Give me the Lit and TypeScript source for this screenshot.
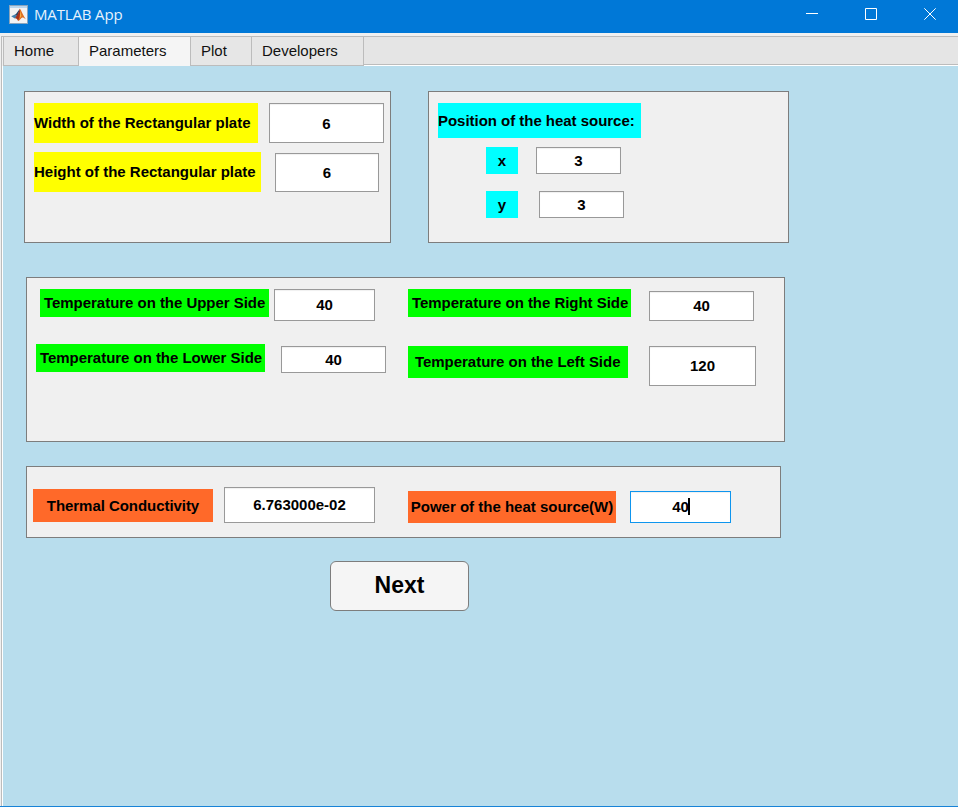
import { LitElement, html, css } from "lit";
import { customElement, property } from "lit/decorators.js";

@customElement("title-bar")
class TitleBar extends LitElement {
  static styles = css`
    :host {
      display: flex;
      height: 33px;
      background: #0078d7;
      color: #fff;
    }
    .logo {
      flex: none;
      margin: 5px 0 0 9px;
    }
    .name {
      flex: 1;
      margin-left: 6px;
      font: 15px/29px "Open Sans", "Noto Sans", sans-serif;
      font-weight: 400;
      letter-spacing: -0.15px;
      color: #e6f2fc;
    }
    .buttons {
      display: flex;
      gap: 47px;
      padding: 8px 22px 0 0;
    }
    .buttons svg {
      display: block;
      fill: none;
      stroke: #fff;
    }
  `;

  render() {
    return html`
      <svg class="logo" width="19" height="19" viewBox="0 0 19 19">
        <rect x="0" y="0" width="19" height="19" fill="#8aa5bd" />
        <rect x="1" y="1" width="17" height="17" fill="#f2f3f4" />
        <rect x="1" y="1" width="17" height="2" fill="#b9d6ee" />
        <path d="M2.2 11.2 6 9.4 8.4 11.6 5.8 13.4Z" fill="#3f7fae" />
        <path d="M6 9.4C7.8 8.8 8.6 6.4 10.8 4L8.6 11.5Z" fill="#27466b" />
        <path d="M10.8 3.8C9.8 7 8.6 10.4 5.8 13.4 7.4 13 8.2 14.6 9 15.8 10.6 15.4 11.6 12.6 12.6 12.4Z" fill="#a8321c" />
        <path d="M10.8 3.8C11.8 4 12.8 8.4 16.8 14.2 14.4 12.4 13.2 12 12.2 13.2 11.2 14.4 10.4 15.5 9 15.8 11 12 11.4 8 10.8 3.8Z" fill="#e0701f" />
        <path d="M11.2 6 12.4 11 11 13Z" fill="#f6b64a" />
      </svg>
      <div class="name">MATLAB App</div>
      <div class="buttons">
        <svg width="12" height="12" viewBox="0 0 12 12"><path d="M0 5.5H12" /></svg>
        <svg width="12" height="12" viewBox="0 0 12 12"><path d="M.5 .5H11.5V11.5H.5Z" /></svg>
        <svg width="12" height="12" viewBox="0 0 12 12"><path d="M.3 .3 11.7 11.7M11.7 .3 .3 11.7" /></svg>
      </div>
    `;
  }
}

@customElement("tab-strip")
class TabStrip extends LitElement {
  @property() active = "Parameters";

  static styles = css`
    :host {
      display: flex;
      height: 29px;
      border-top: 1px solid #bcbcbc;
      font: 15px/28px "Liberation Sans", Arial, sans-serif;
      color: #111;
    }
    .tab {
      box-sizing: border-box;
      height: 29px;
      padding-left: 10px;
      border-right: 1px solid #bcbcbc;
      box-shadow: inset 0 -1px #bcbcbc;
      background: #e6e6e6;
    }
    .tab.active {
      background: #f5f5f5;
      box-shadow: none;
    }
    .home {
      width: 76px;
      border-left: 1px solid #bcbcbc;
    }
    .parameters {
      width: 112px;
    }
    .plot {
      width: 61px;
    }
    .developers {
      width: 112px;
    }
    .rest {
      flex: 1;
      height: 27px;
      background: #e5e5e5;
      border-bottom: 1px solid #bcbcbc;
      box-shadow: 0 1px #fff;
    }
  `;

  render() {
    return html`
      ${["Home", "Parameters", "Plot", "Developers"].map(
        (t) => html`<div class="tab ${t.toLowerCase()} ${t === this.active ? "active" : ""}">${t}</div>`
      )}
      <div class="rest"></div>
    `;
  }
}

@customElement("app-root")
class AppRoot extends LitElement {
  static styles = css`
    :host {
      display: flex;
      flex-direction: column;
      height: 807px;
      box-sizing: border-box;
      overflow: hidden;
      background: #f0f0f0;
      border-bottom: 1px solid #1883d7;
      font: bold 15px "Liberation Sans", Arial, sans-serif;
      color: #000;
    }
    .window {
      flex: 1;
      margin: 3px 0 0 1px;
      display: flex;
      flex-direction: column;
      border-left: 1px solid #bcbcbc;
    }
    tab-strip {
      padding-left: 1px;
    }
    .content {
      flex: 1;
      background: #b8dded;
      border-left: 1px solid #fff;
      padding: 25px 0 0 21px;
    }
    .top {
      display: flex;
      gap: 37px;
    }
    .panel {
      box-sizing: border-box;
      background: #f0f0f0;
      border: 1px solid #7d7d7d;
    }
    .row {
      display: flex;
      align-items: flex-start;
    }
    .label,
    .value {
      box-sizing: border-box;
      flex: none;
      display: flex;
      align-items: center;
      white-space: nowrap;
    }
    .value {
      justify-content: center;
      background: #fff;
      border: 1px solid #999;
      box-shadow: inset 0 1px 1px #f0f0f0;
    }
    .yellow { background: #ff0; padding-bottom: 2px; }
    .cyan { background: #0ff; }
    .green { background: #0f0; padding-bottom: 2px; letter-spacing: -0.035px; }
    .orange { background: #ff6929; }
    .mid { justify-content: center; }

    .plate { width: 367px; height: 152px; padding: 11px 0 0 9px; }
    .w-label { width: 224px; height: 40px; }
    .w-value { width: 115px; height: 40px; margin-left: 11px; padding-top: 1px; }
    .h-row { margin-top: 9px; }
    .h-label { width: 227px; height: 40px; }
    .h-value { width: 104px; height: 39px; margin: 1px 0 0 14px; }

    .source { width: 361px; height: 152px; padding: 11px 0 0 9px; }
    .pos-label { width: 203px; height: 35px; letter-spacing: -0.03px; }
    .x-row { margin: 9px 0 0 48px; }
    .y-row { margin: 17px 0 0 48px; }
    .axis { width: 32px; height: 27px; }
    .coord { width: 85px; height: 27px; margin-left: 18px; }
    .y-row .coord { margin-left: 21px; }

    .temps { width: 759px; height: 165px; margin: 34px 0 0 2px; padding: 11px 0 0 9px; }
    .upper { width: 229px; height: 28px; margin-left: 4px; padding-left: 4px; }
    .upper-v { width: 101px; height: 32px; margin-left: 5px; padding-bottom: 2px; }
    .right { width: 223px; height: 28px; margin-left: 33px; padding-left: 4px; }
    .right-v { width: 105px; height: 30px; margin: 2px 0 0 18px; padding-bottom: 2px; }
    .t-row2 { margin-top: 23px; }
    .lower { width: 229px; height: 28px; padding-left: 4px; }
    .lower-v { width: 105px; height: 27px; margin: 2px 0 0 16px; }
    .left { width: 220px; height: 32px; margin: 2px 0 0 22px; padding-left: 7px; }
    .left-v { width: 107px; height: 40px; margin: 2px 0 0 21px; padding-bottom: 2px; }

    .physics { width: 755px; height: 72px; margin: 24px 0 0 2px; padding: 20px 0 0 6px; }
    .cond { width: 180px; height: 33px; margin-top: 2px; letter-spacing: -0.05px; }
    .cond-v { width: 151px; height: 36px; margin-left: 11px; padding-bottom: 2px; }
    .power { width: 208px; height: 32px; margin: 4px 0 0 33px; padding-bottom: 2px; }
    .power-v { width: 101px; height: 32px; margin: 4px 0 0 14px; padding-bottom: 2px; border-color: #0e95ee; }
    .caret { width: 2px; height: 17px; margin: 0 -1px 0 -1px; background: #000; }

    .next {
      box-sizing: border-box;
      display: block;
      width: 139px;
      height: 50px;
      margin: 23px 0 0 306px;
      padding: 0 0 2px;
      background: #f5f5f5;
      border: 1px solid #7d7d7d;
      border-radius: 6px;
      font: bold 23px/46px "Liberation Sans", Arial, sans-serif;
      color: #000;
    }
  `;

  private label(cls: string, text: string) {
    return html`<div class="label ${cls}">${text}</div>`;
  }

  private value(cls: string, text: string, focused = false) {
    return html`<div class="value ${cls}"><span>${text}</span>${focused ? html`<i class="caret"></i>` : ""}</div>`;
  }

  render() {
    return html`
      <title-bar></title-bar>
      <div class="window">
        <tab-strip></tab-strip>
        <div class="content">
          <div class="top">
            <div class="panel plate">
              <div class="row">
                ${this.label("yellow w-label", "Width of the Rectangular plate")} ${this.value("w-value", "6")}
              </div>
              <div class="row h-row">
                ${this.label("yellow h-label", "Height of the Rectangular plate")} ${this.value("h-value", "6")}
              </div>
            </div>
            <div class="panel source">
              ${this.label("cyan pos-label", "Position of the heat source:")}
              <div class="row x-row">${this.label("cyan mid axis", "x")} ${this.value("coord", "3")}</div>
              <div class="row y-row">${this.label("cyan mid axis", "y")} ${this.value("coord", "3")}</div>
            </div>
          </div>
          <div class="panel temps">
            <div class="row">
              ${this.label("green upper", "Temperature on the Upper Side")} ${this.value("upper-v", "40")}
              ${this.label("green right", "Temperature on the Right Side")} ${this.value("right-v", "40")}
            </div>
            <div class="row t-row2">
              ${this.label("green lower", "Temperature on the Lower Side")} ${this.value("lower-v", "40")}
              ${this.label("green left", "Temperature on the Left Side")} ${this.value("left-v", "120")}
            </div>
          </div>
          <div class="panel physics">
            <div class="row">
              ${this.label("orange mid cond", "Thermal Conductivity")} ${this.value("cond-v", "6.763000e-02")}
              ${this.label("orange mid power", "Power of the heat source(W)")} ${this.value("power-v", "40", true)}
            </div>
          </div>
          <button class="next">Next</button>
        </div>
      </div>
    `;
  }
}
